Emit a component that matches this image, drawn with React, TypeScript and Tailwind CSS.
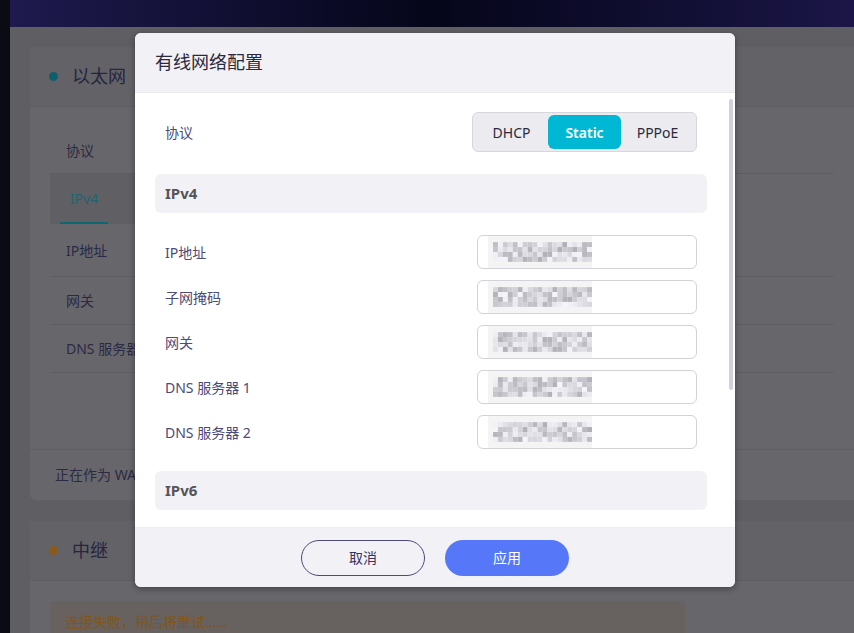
import React from "react";

const font = { fontFamily: '"Noto Sans", "Noto Sans CJK SC", sans-serif' };

const fields = [
  { label: "IP地址", seed: 3 },
  { label: "子网掩码", seed: 7 },
  { label: "网关", seed: 11 },
  { label: "DNS 服务器 1", seed: 17 },
  { label: "DNS 服务器 2", seed: 23 },
];

// pixelated (redacted) value inside each input
function Mosaic({ seed }: { seed: number }) {
  const cols = 20;
  const rows = 4;
  const cells: React.ReactNode[] = [];
  let s = seed * 9301 + 49297;
  for (let r = 0; r < rows; r++) {
    for (let c = 0; c < cols; c++) {
      s = (s * 9301 + 49297) % 233280;
      const v = s / 233280;
      const shade = Math.round(175 + v * 70);
      const fill = `rgb(${shade},${shade},${shade + 6})`;
      cells.push(<rect key={`${r}-${c}`} x={c * 5} y={r * 5} width={5} height={5} fill={fill} />);
    }
  }
  return (
    <div className="flex h-full w-[104px] items-center bg-[#f4f4f5] pl-[5px]">
      <div className="flex h-[20px] w-full items-center bg-white">
        <svg width="99" height="20" viewBox="0 0 100 20">
          {cells}
        </svg>
      </div>
    </div>
  );
}

function SectionTitle({ children }: { children: React.ReactNode }) {
  return (
    <div className="flex h-[39px] items-center rounded-md bg-[#f2f1f6] px-[10px] text-[15px] font-bold text-[#555458]">
      {children}
    </div>
  );
}

function Background() {
  return (
    <div className="flex h-[633px] w-[854px] overflow-hidden bg-[#0b0b13]" style={font}>
      <div className="w-[10px] shrink-0" />
      <div className="flex flex-1 flex-col bg-[#5f5e63]">
        <div className="h-[27px] shrink-0 bg-gradient-to-r from-[#1e1a4e] via-[#06061a] to-[#1b1647]" />
        <div className="flex flex-col gap-[21px] pl-[20px] pt-[20px]">
          <div className="h-[453px] rounded-l-md bg-[#67666b]">
            <div className="flex h-[60px] items-center gap-[14px] border-b border-[#5f5e63] bg-[#636267] pl-[19px]">
              <span className="h-[9px] w-[9px] rounded-full bg-[#0e5f6e]" />
              <span className="text-[18px] text-[#262540]">以太网</span>
            </div>
            <div className="px-[20px] pt-[20px]">
              <div className="flex h-[47px] items-center border-b border-[#5e5d62] pl-[16px] text-[14px] text-[#2b2a44]">协议</div>
              <div className="flex h-[50px] w-[90px] items-end bg-[#605f64] pl-[10px]">
                <div className="flex h-[50px] w-[48px] items-center justify-center border-b-2 border-[#0e6670] text-[14px] text-[#1e6670]">IPv4</div>
              </div>
              <div className="flex h-[53px] items-center border-b border-[#5e5d62] pl-[16px] text-[14px] text-[#2b2a44]">IP地址</div>
              <div className="flex h-[48px] items-center border-b border-[#5e5d62] pl-[16px] text-[14px] text-[#2b2a44]">网关</div>
              <div className="flex h-[48px] items-center border-b border-[#5e5d62] pl-[16px] text-[14px] text-[#2b2a44]">
                <span className="w-[69px] overflow-hidden whitespace-nowrap">DNS 服务器</span>
              </div>
            </div>
            <div className="mt-[76px] flex h-[50px] items-center border-t border-[#5e5d62] pl-[25px] text-[14px] text-[#2b2a44]">
              <span className="w-[80px] overflow-hidden whitespace-nowrap">正在作为 WAN 口使用</span>
            </div>
          </div>
          <div className="h-[200px] rounded-l-md bg-[#67666b]">
            <div className="flex h-[60px] items-center gap-[14px] border-b border-[#5f5e63] bg-[#636267] pl-[19px]">
              <span className="h-[9px] w-[9px] rounded-full bg-[#8a5a1a]" />
              <span className="text-[18px] text-[#262540]">中继</span>
            </div>
            <div className="px-[20px] pt-[20px]">
              <div className="flex h-[40px] w-[635px] items-center rounded bg-[#67625f] pl-[15px] text-[14px] text-[#7f561e]">连接失败，稍后将重试......</div>
            </div>
          </div>
        </div>
      </div>
    </div>
  );
}

function Dialog() {
  return (
    <div className="absolute left-[135px] top-[33px] flex h-[554px] w-[600px] flex-col overflow-hidden rounded-md bg-white shadow-[0_2px_6px_rgba(0,0,0,0.35)]" style={font}>
      <div className="flex h-[60px] shrink-0 items-center border-b border-[#e9e9ef] bg-[#f2f1f6] px-[20px] text-[18px] text-[#2a2a3c]">
        有线网络配置
      </div>
      <div className="relative flex-1 overflow-hidden">
        <div className="flex flex-col pl-[20px] pr-[28px] pt-[19px]">
          <div className="flex items-center justify-between px-[10px]">
            <span className="text-[14px] text-[#4b4a78]">协议</span>
            <div className="flex rounded-md border border-[#d6d6dc] bg-[#ebebf0] p-[2px]">
              <button className="h-[34px] w-[73px] rounded-md text-[14px] text-[#2a2a3c]">DHCP</button>
              <button className="h-[34px] w-[73px] rounded-md bg-[#00b8d4] text-[14px] font-semibold text-white">Static</button>
              <button className="h-[34px] w-[73px] rounded-md text-[14px] text-[#2a2a3c]">PPPoE</button>
            </div>
          </div>
          <div className="mt-[22px]">
            <SectionTitle>IPv4</SectionTitle>
          </div>
          <div className="mt-[22px] flex flex-col gap-[11px] px-[10px]">
            {fields.map((f) => (
              <div key={f.label} className="flex items-center justify-between">
                <span className="text-[14px] text-[#4b4a78]">{f.label}</span>
                <div className="flex h-[34px] w-[220px] items-stretch rounded-md border border-[#d2d2d8] pl-[10px]">
                  <Mosaic seed={f.seed} />
                </div>
              </div>
            ))}
          </div>
          <div className="mt-[22px]">
            <SectionTitle>IPv6</SectionTitle>
          </div>
        </div>
        <div className="absolute right-[2px] top-[6px] h-[291px] w-[4px] rounded-full bg-[#d0d1dc]" />
      </div>
      <div className="flex h-[60px] shrink-0 items-center justify-center gap-[20px] border-t border-[#ececf1] bg-[#f2f1f6]">
        <button className="h-[36px] w-[124px] rounded-full border border-[#4b4a78] text-[14px] text-[#34335e]">取消</button>
        <button className="h-[36px] w-[124px] rounded-full bg-[#5577f8] text-[14px] text-white">应用</button>
      </div>
    </div>
  );
}

export default function App() {
  return (
    <div className="relative h-[633px] w-[854px] overflow-hidden">
      <Background />
      <Dialog />
    </div>
  );
}
